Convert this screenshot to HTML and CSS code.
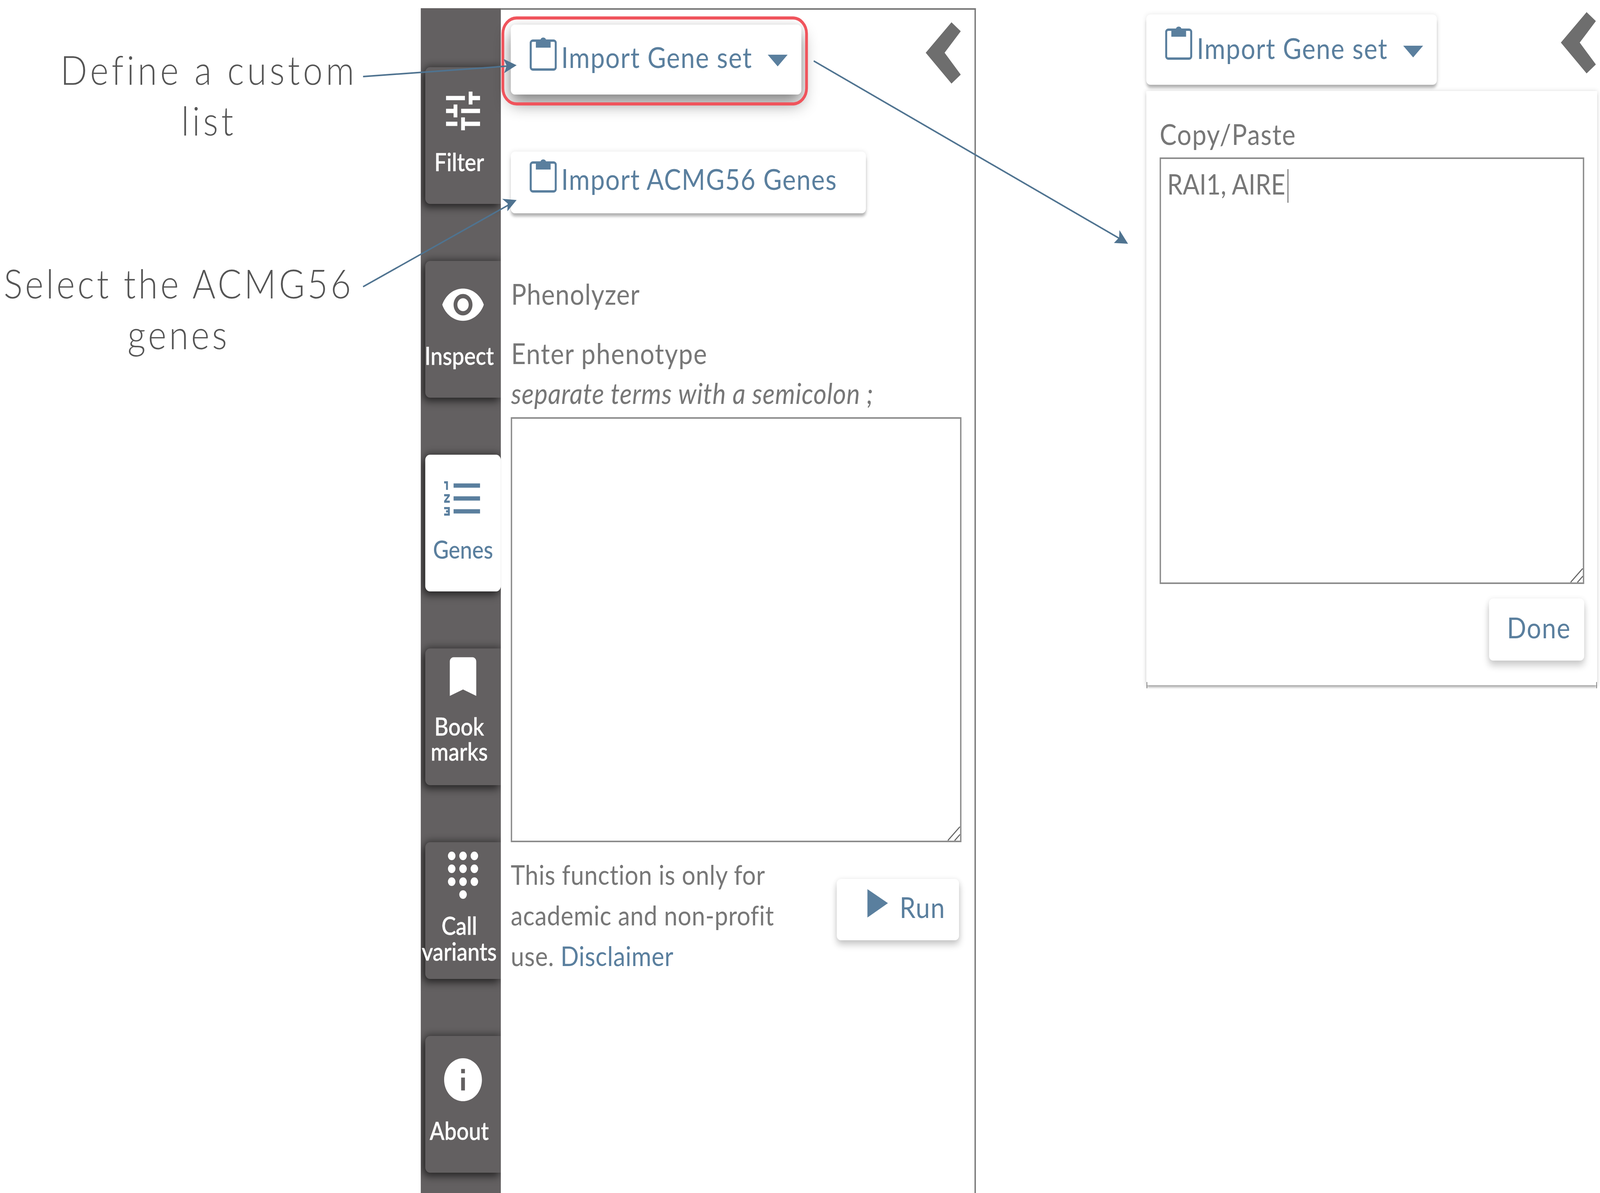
FILE: index.html
```html
<!DOCTYPE html>
<html lang="en">
<head>
<meta charset="utf-8">
<title>Import gene set</title>
<link rel="stylesheet" href="styles.css">
</head>
<body>
<div class="stage">
<div class="figure">
  <div class="notes">
    <p class="note note-custom">Define a custom<br>list</p>
    <p class="note note-acmg">Select the ACMG56<br>genes</p>
  </div>

  <div class="app">
    <nav class="sidebar">
      <div class="tab">
        <svg class="tab-icon" viewBox="0 0 24 24"><path d="M3 17v2h6v-2H3zM3 5v2h10V5H3zm10 16v-2h8v-2h-8v-2h-2v6h2zM7 9v2H3v2h4v2h2V9H7zm14 4v-2H11v2h10zm-6-4h2V7h4V5h-4V3h-2v6z"/></svg>
        <span class="tab-label">Filter</span>
      </div>
      <div class="tab">
        <svg class="tab-icon" viewBox="0 0 24 24"><path d="M12 4.5C7 4.5 2.73 7.61 1 12c1.73 4.39 6 7.5 11 7.5s9.27-3.11 11-7.5c-1.73-4.39-6-7.5-11-7.5zM12 17c-2.76 0-5-2.24-5-5s2.24-5 5-5 5 2.24 5 5-2.24 5-5 5zm0-8c-1.66 0-3 1.34-3 3s1.34 3 3 3 3-1.34 3-3-1.34-3-3-3z"/></svg>
        <span class="tab-label">Inspect</span>
      </div>
      <div class="tab tab-active">
        <svg class="tab-icon" viewBox="0 0 24 24"><path d="M2 17h2v.5H3v1h1v.5H2v1h3v-4H2v1zm1-9h1V4H2v1h1v3zm-1 3h1.8L2 13.1v.9h3v-1H3.2L5 10.9V10H2v1zm5-6v2h14V5H7zm0 14h14v-2H7v2zm0-6h14v-2H7v2z"/></svg>
        <span class="tab-label">Genes</span>
      </div>
      <div class="tab tab-bookmarks">
        <svg class="tab-icon" viewBox="0 0 24 24"><path d="M17 3H7c-1.1 0-2 .9-2 2v16l7-3 7 3V5c0-1.1-.9-2-2-2z"/></svg>
        <span class="tab-label">Book<br>marks</span>
      </div>
      <div class="tab tab-call">
        <svg class="tab-icon" viewBox="0 0 132 132"><circle cx="33" cy="16" r="11"/><circle cx="66" cy="16" r="11"/><circle cx="99" cy="16" r="11"/><circle cx="33" cy="49" r="11"/><circle cx="66" cy="49" r="11"/><circle cx="99" cy="49" r="11"/><circle cx="33" cy="82" r="11"/><circle cx="66" cy="82" r="11"/><circle cx="99" cy="82" r="11"/><circle cx="66" cy="115" r="11"/></svg>
        <span class="tab-label">Call<br>variants</span>
      </div>
      <div class="tab">
        <svg class="tab-icon" viewBox="0 0 24 24"><path d="M12 2C6.48 2 2 6.48 2 12s4.48 10 10 10 10-4.48 10-10S17.52 2 12 2zm1 15h-2v-6h2v6zm0-8h-2V7h2v2z"/></svg>
        <span class="tab-label">About</span>
      </div>
    </nav>

    <main class="main">
      <div class="top-row">
        <div class="button button-import button-highlight">
          <svg class="clip" viewBox="0 0 79 91"><path class="clip-outline" d="M9 13h61a6 6 0 0 1 6 6v62a6 6 0 0 1-6 6H9a6 6 0 0 1-6-6V19a6 6 0 0 1 6-6z"/><path class="clip-fill" d="M18 11h13a9 9 0 0 1 17 0h13v20H18z"/></svg>
          <span class="button-text">Import Gene set</span>
          <svg class="caret" viewBox="0 0 58 30"><path d="M0 0h58L29 30z"/></svg>
        </div>
        <svg class="chevron" viewBox="0 0 102 157"><path d="M75 0l27 23-47 55 47 56-27 23L0 78z"/></svg>
      </div>

      <div class="button button-acmg">
        <svg class="clip" viewBox="0 0 79 91"><path class="clip-outline" d="M9 13h61a6 6 0 0 1 6 6v62a6 6 0 0 1-6 6H9a6 6 0 0 1-6-6V19a6 6 0 0 1 6-6z"/><path class="clip-fill" d="M18 11h13a9 9 0 0 1 17 0h13v20H18z"/></svg>
        <span class="button-text">Import ACMG56 Genes</span>
      </div>

      <div class="text-line phenolyzer">Phenolyzer</div>
      <div class="text-line enter">Enter phenotype</div>
      <div class="text-line hint">separate terms with a semicolon ;</div>

      <div class="textbox textbox-phenotype">
        <svg class="grip" viewBox="0 0 36 36"><path d="M36 0L0 36M36 20L20 36"/></svg>
      </div>

      <div class="foot-row">
        <p class="disclaimer">This function is only for academic and non-profit use. <a class="link">Disclaimer</a></p>
        <div class="button button-run">
          <svg class="play" viewBox="0 0 60 73"><path d="M0 0l60 36L0 73z"/></svg>
          <span class="button-text">Run</span>
        </div>
      </div>
    </main>
  </div>

  <div class="side">
    <div class="side-head">
      <div class="button button-import button-side">
        <svg class="clip" viewBox="0 0 79 91"><path class="clip-outline" d="M9 13h61a6 6 0 0 1 6 6v62a6 6 0 0 1-6 6H9a6 6 0 0 1-6-6V19a6 6 0 0 1 6-6z"/><path class="clip-fill" d="M18 11h13a9 9 0 0 1 17 0h13v20H18z"/></svg>
        <span class="button-text">Import Gene set</span>
        <svg class="caret" viewBox="0 0 58 30"><path d="M0 0h58L29 30z"/></svg>
      </div>
      <svg class="chevron" viewBox="0 0 102 157"><path d="M75 0l27 23-47 55 47 56-27 23L0 78z"/></svg>
    </div>
    <section class="popover">
      <div class="text-line">Copy/Paste</div>
      <div class="textbox textbox-paste">
        <span class="typed">RAI1, AIRE</span>
        <svg class="grip" viewBox="0 0 36 36"><path d="M36 0L0 36M36 20L20 36"/></svg>
      </div>
      <div class="button button-done"><span class="button-text">Done</span></div>
    </section>
  </div>

  <svg class="arrows" viewBox="0 0 4658 3054">
    <path d="M1057 196L1480 169"/>
    <path d="M1057 734L1484 523"/>
    <path d="M2369 156L3262 612"/>
    <polygon points="1504,167 1468,187 1475,168 1466,151"/>
    <polygon points="1504,512 1477,541 1478,521 1462,509"/>
    <polygon points="3284,624 3243,622 3258,608 3259,589"/>
  </svg>
</div>
</div>
</body>
</html>
```
FILE: styles.css
```css
* { box-sizing: border-box; }
html, body { margin: 0; padding: 0; background: #fff; }
body { font-family: "Lato", "Open Sans", sans-serif; color: #777; }

.stage { width: 100%; height: 3054px; overflow: hidden; }

.figure {
  position: relative;
  display: flex;
  align-items: flex-start;
  width: 4658px;
  height: 3054px;
  overflow: hidden;
  background: #fff;
}

@media (max-width: 4600px) {
  .figure { transform: scaleX(.87935); transform-origin: 0 0; }
}

/* annotations */
.notes { flex: none; width: 1225px; padding-top: 112px; }
.note {
  margin: 0;
  font-weight: 300;
  font-size: 103px;
  line-height: 130px;
  letter-spacing: 9px;
  text-align: center;
  white-space: nowrap;
  color: #555;
}
.note-custom { width: 1216px; }
.note-acmg { width: 1040px; margin-top: 287px; letter-spacing: 7.5px; }

/* app */
.app {
  flex: none;
  display: flex;
  width: 1616px;
  height: 3033px;
  margin-top: 21px;
}
.sidebar {
  flex: none;
  display: flex;
  flex-direction: column;
  gap: 146px;
  width: 233px;
  padding: 151px 0 0 13px;
  background: #636061;
  overflow: hidden;
}
.tab {
  display: flex;
  flex-direction: column;
  align-items: center;
  height: 350px;
  padding-top: 46px;
  border-radius: 14px 0 0 14px;
  background: #636061;
  box-shadow: -6px 10px 22px rgba(0, 0, 0, .55), 0 -6px 18px rgba(0, 0, 0, .3);
  color: #fff;
}
.tab-icon { flex: none; width: 132px; height: 132px; fill: #fff; }
.tab-label {
  margin-top: 32px;
  padding-right: 22px;
  font-size: 63px;
  font-weight: 500;
  line-height: 64px;
  text-align: center;
  white-space: nowrap;
  -webkit-text-stroke: .6px currentColor;
}
.tab-active { background: #fff; color: #5a7f9e; border-radius: 14px; }
.tab-active .tab-icon { fill: #5a7f9e; }
.tab-active .tab-label { -webkit-text-stroke: 0; padding-right: 0; }
.tab-bookmarks { padding-top: 6px; }
.tab-bookmarks .tab-label { margin-top: 29px; }
.tab-call { padding-top: 19px; }
.tab-call .tab-label { margin-top: 29px; line-height: 66px; }

.main {
  flex: 1;
  border-top: 4px solid #777;
  border-right: 4px solid #777;
  height: 100%;
  padding: 0 37px 0 29px;
  min-width: 0;
}
.top-row { display: flex; justify-content: space-between; align-items: flex-start; padding: 32px 3px 0 0; }
.chevron { flex: none; width: 102px; height: 157px; fill: #6e6e6e; }

/* buttons */
.button {
  flex: none;
  position: relative;
  display: flex;
  align-items: flex-start;
  border-radius: 12px;
  background: #fff;
  box-shadow: 0 10px 8px -2px rgba(0, 0, 0, .28), 0 0 14px rgba(0, 0, 0, .1);
  color: #5a7f9e;
}
.button-text { font-size: 74px; line-height: 100px; letter-spacing: 2px; white-space: nowrap; }
.clip { flex: none; width: 79px; height: 91px; margin: -5px 13px 0 0; }
.clip-outline { fill: none; stroke: #5a7f9e; stroke-width: 6; }
.clip-fill { fill: #5a7f9e; }
.caret { flex: none; width: 58px; height: 30px; margin: 44px 0 0 45px; fill: #5a7f9e; }
.play { flex: none; width: 60px; height: 73px; margin: 4px 34px 0 0; fill: #5a7f9e; }

.button-import { width: 846px; height: 179px; padding: 33px 0 0 55px; margin-top: 6px; }
.button-highlight { box-shadow: 0 24px 44px rgba(0, 0, 0, .45), 0 0 14px rgba(0, 0, 0, .1); }
.button-highlight::after {
  content: "";
  position: absolute;
  inset: -21px -19px -28px -27px;
  border: 8px solid #f0545c;
  border-radius: 44px;
}
.button-acmg { width: 1034px; height: 158px; padding: 20px 0 0 55px; margin-top: 146px; }
.button-run { width: 356px; height: 157px; padding: 22px 0 0 89px; margin: 64px 8px 0 0; box-shadow: 0 12px 18px rgba(0, 0, 0, .2), 0 0 14px rgba(0, 0, 0, .08); }
.button-side { height: 180px; padding-top: 36px; }
.button-side .clip { margin-top: -10px; }
.button-done { align-self: flex-end; width: 277px; height: 159px; padding: 24px 0 0 52px; margin-top: 37px; box-shadow: 0 14px 18px rgba(0, 0, 0, .18), 0 0 14px rgba(0, 0, 0, .08); }

/* text */
.text-line { font-size: 74px; line-height: 100px; letter-spacing: 2px; color: #777; padding-left: 1px; white-space: nowrap; }
.phenolyzer { margin-top: 156px; letter-spacing: 1.3px; }
.enter { margin-top: 52px; }
.hint { margin-top: 2px; font-style: italic; letter-spacing: 1px; }

.textbox { position: relative; border: 4px solid #8c8c8c; background: #fff; }
.textbox-phenotype { width: 1312px; height: 1088px; margin-top: 12px; }
.grip {
  position: absolute;
  right: 0;
  bottom: 0;
  width: 36px;
  height: 36px;
  fill: none;
  stroke: #666;
  stroke-width: 3;
}

.foot-row { display: flex; justify-content: space-between; align-items: flex-start; margin-top: 30px; }
.disclaimer { margin: 0; width: 800px; font-size: 70px; line-height: 104px; letter-spacing: .8px; color: #777; }
.link { color: #5a7f9e; }

/* right part */
.side { flex: none; width: 1313px; margin-left: 496px; }
.side-head { display: flex; justify-content: space-between; align-items: flex-start; height: 233px; padding: 31px 4px 0 0; }
.popover {
  position: relative;
  display: flex;
  flex-direction: column;
  height: 1521px;
  padding: 60px 38px 0 39px;
  background: #fff;
  box-shadow: 0 7px 6px -2px rgba(0, 0, 0, .3), 0 0 12px rgba(0, 0, 0, .14);
}
.popover::before,
.popover::after {
  content: "";
  position: absolute;
  bottom: -8px;
  width: 2px;
  height: 16px;
  background: #777;
}
.popover::before { left: 1px; }
.popover::after { right: 1px; }
.popover .text-line { padding-left: 0; }
.textbox-paste { height: 1092px; margin-top: 10px; padding: 26px 0 0 18px; font-size: 72px; line-height: 74px; color: #777; }
.typed { display: inline-block; padding: 0 6px 12px 0; border-right: 3px solid #777; }

/* overlay arrows */
.arrows { position: absolute; inset: 0; width: 4658px; height: 3054px; pointer-events: none; }
.arrows path { fill: none; stroke: #4f7390; stroke-width: 4; }
.arrows polygon { fill: #4f7390; }
```
